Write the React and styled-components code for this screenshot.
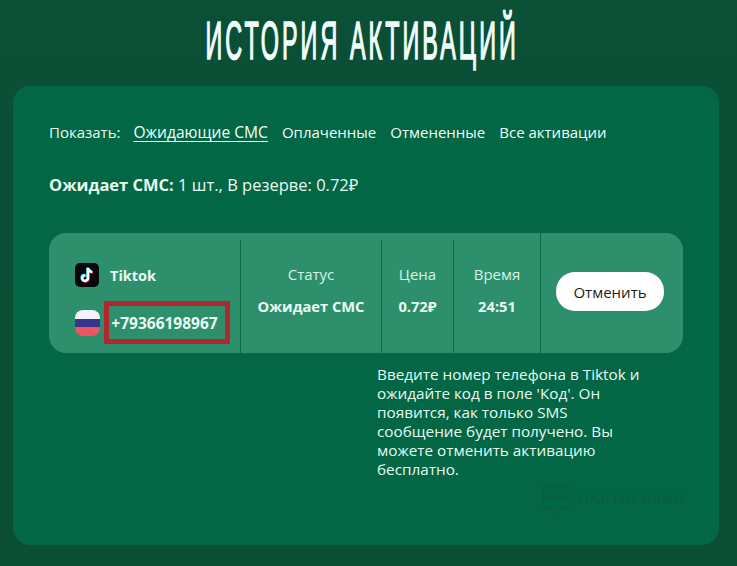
import styled, { createGlobalStyle } from 'styled-components';

const GlobalStyle = createGlobalStyle`
  html, body {
    margin: 0;
    padding: 0;
    background: #0a5135;
  }
  body {
    font-family: "Open Sans", "Noto Sans", sans-serif;
    color: #e8fbf3;
  }
`;

const Page = styled.div`
  width: 737px;
  height: 566px;
  box-sizing: border-box;
  overflow: hidden;
  padding: 0 18px 21px 13px;
  display: flex;
  flex-direction: column;
  background: linear-gradient(180deg, #0a5036 0%, #0a4e34 100%);
`;

const Title = styled.h1`
  margin: 0;
  height: 86px;
  flex: none;
  display: flex;
  align-items: center;
  justify-content: center;
  font-family: "Liberation Sans", sans-serif;
  font-size: 53px;
  font-weight: 400;
  color: #f2fffa;
  white-space: nowrap;
  letter-spacing: 7px;
  -webkit-text-stroke: 1.6px #f2fffa;
  span {
    display: inline-block;
    transform: translateX(-4px) scaleX(0.44);
    margin-top: -6px;
  }
`;

const Card = styled.main`
  position: relative;
  flex: 1;
  background: #036644;
  border-radius: 17px;
  padding: 35px 36px 0;
`;

const Filters = styled.nav`
  display: flex;
  align-items: center;
  gap: 14px;
  font-size: 15px;
  line-height: 22px;
`;

const FilterLabel = styled.span`
  margin-right: -1px;
`;

const FilterLink = styled.a`
  color: #f0fff9;
  font-size: ${(props) => (props.$active ? 15.6 : 15)}px;
  text-decoration: ${(props) => (props.$active ? 'underline' : 'none')};
  text-underline-offset: 3px;
`;

const Summary = styled.p`
  margin: 30px 0 0;
  font-size: 16.5px;
  line-height: 24px;
  b { font-weight: 700; }
`;

const ActivationRow = styled.section`
  margin-top: 36px;
  height: 120px;
  width: 634px;
  background: #2e8f6d;
  border-radius: 17px;
  display: flex;
  align-items: stretch;
`;

const ServiceCell = styled.div`
  width: 192px;
  box-sizing: border-box;
  margin-top: 7px;
  padding: 23px 0 0 26px;
  border-right: 1px solid #0d6a48;
  display: flex;
  flex-direction: column;
  gap: 14px;
`;

const ServiceLine = styled.div`
  display: flex;
  align-items: center;
  gap: 11px;
  font-size: 14.5px;
  font-weight: 700;
`;

const PhoneLine = styled.div`
  display: flex;
  align-items: center;
  gap: 4px;
`;

const FlagIcon = styled.div`
  width: 25px;
  height: 26px;
  border-radius: 8px;
  overflow: hidden;
  background: linear-gradient(180deg, #f4f4fa 0 33%, #36368f 33% 66%, #ee5560 66%);
`;

const PhoneBox = styled.div`
  width: 126px;
  height: 43px;
  box-sizing: border-box;
  border: 5px solid #b3262f;
  padding-right: 5px;
  display: flex;
  align-items: center;
  justify-content: center;
  font-size: 15.5px;
  font-weight: 700;
  white-space: nowrap;
`;

const InfoCell = styled.div`
  width: ${(props) => props.$width}px;
  box-sizing: border-box;
  margin-top: ${(props) => (props.$tall ? 0 : 7)}px;
  padding-top: ${(props) => (props.$tall ? 30 : 23)}px;
  border-right: 1px solid #0d6a48;
  text-align: center;
`;

const InfoLabel = styled.div`
  font-size: 15px;
  line-height: 22px;
  color: #d3f4e8;
`;

const InfoValue = styled.div`
  margin-top: 10px;
  font-size: 14.7px;
  line-height: 22px;
  font-weight: 700;
`;

const ActionCell = styled.div`
  flex: 1;
  display: flex;
  justify-content: center;
  padding: 39px 4px 0 0;
`;

const CancelButton = styled.button`
  width: 108px;
  height: 39px;
  border: none;
  border-radius: 19px;
  background: #fff;
  color: #1c1c1c;
  font-family: inherit;
  font-size: 15px;
`;

const Hint = styled.p`
  margin: 12px 0 0 328px;
  width: 268px;
  font-size: 15.3px;
  line-height: 19px;
`;

const Watermark = styled.div`
  position: absolute;
  left: 529px;
  top: 399px;
  display: flex;
  align-items: center;
  gap: 10px;
  color: #0c5c3e;
  font-family: "Liberation Sans", sans-serif;
  font-size: 13.5px;
  letter-spacing: 1.6px;
`;

function TiktokIcon() {
  return (
    <svg width="24" height="24" viewBox="0 0 24 24">
      <rect width="24" height="24" rx="5" fill="#07070c" />
      <path
        d="M13 5v10.2a2.9 2.9 0 1 1-2.6-2.9M13 5c.4 2.4 1.8 3.8 4.2 4"
        fill="none"
        stroke="#25f4ee"
        strokeWidth="2.3"
        transform="translate(-.7 -.5)"
      />
      <path
        d="M13 5v10.2a2.9 2.9 0 1 1-2.6-2.9M13 5c.4 2.4 1.8 3.8 4.2 4"
        fill="none"
        stroke="#fe2c55"
        strokeWidth="2.3"
        transform="translate(.7 .5)"
      />
      <path
        d="M13 5v10.2a2.9 2.9 0 1 1-2.6-2.9M13 5c.4 2.4 1.8 3.8 4.2 4"
        fill="none"
        stroke="#fff"
        strokeWidth="2.3"
      />
    </svg>
  );
}

function WatermarkIcon() {
  return (
    <svg width="27" height="29" viewBox="0 0 27 29" fill="none" stroke="#0c5c3e" strokeWidth="1">
      <path d="M1 1h25v22H16l-2.500 5-3-5H1z" />
      <path d="M5 11h7v3H5zM15 11h7v3h-7zM12 12h3" />
    </svg>
  );
}

export default function App() {
  return (
    <Page>
      <GlobalStyle />
      <Title><span>ИСТОРИЯ АКТИВАЦИЙ</span></Title>
      <Card>
        <Filters>
          <FilterLabel>Показать:</FilterLabel>
          <FilterLink $active>Ожидающие СМС</FilterLink>
          <FilterLink>Оплаченные</FilterLink>
          <FilterLink>Отмененные</FilterLink>
          <FilterLink>Все активации</FilterLink>
        </Filters>
        <Summary><b>Ожидает СМС:</b> 1 шт., В резерве: 0.72₽</Summary>
        <ActivationRow>
          <ServiceCell>
            <ServiceLine><TiktokIcon />Tiktok</ServiceLine>
            <PhoneLine>
              <FlagIcon />
              <PhoneBox>+79366198967</PhoneBox>
            </PhoneLine>
          </ServiceCell>
          <InfoCell $width={141}>
            <InfoLabel>Статус</InfoLabel>
            <InfoValue>Ожидает СМС</InfoValue>
          </InfoCell>
          <InfoCell $width={72}>
            <InfoLabel>Цена</InfoLabel>
            <InfoValue>0.72₽</InfoValue>
          </InfoCell>
          <InfoCell $width={87} $tall>
            <InfoLabel>Время</InfoLabel>
            <InfoValue>24:51</InfoValue>
          </InfoCell>
          <ActionCell>
            <CancelButton>Отменить</CancelButton>
          </ActionCell>
        </ActivationRow>
        <Hint>
          Введите номер телефона в Tiktok и ожидайте код в поле 'Код'. Он появится, как только SMS
          сообщение будет получено. Вы можете отменить активацию бесплатно.
        </Hint>
        <Watermark><WatermarkIcon />ПАРТНЕРКИН</Watermark>
      </Card>
    </Page>
  );
}
